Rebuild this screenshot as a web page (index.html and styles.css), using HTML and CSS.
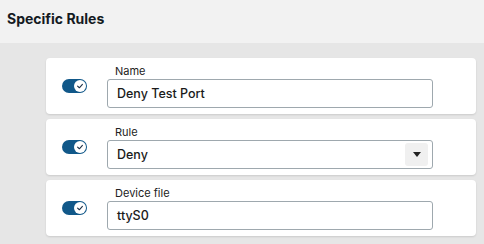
FILE: index.html
```html
<!DOCTYPE html>
<html>
<head>
<meta charset="utf-8">
<link rel="stylesheet" href="styles.css">
</head>
<body>
<header class="header"><h1 class="title">Specific Rules</h1></header>
<main class="list">
  <section class="card">
    <span class="toggle"><span class="knob"><svg viewBox="0 0 10 10" width="8" height="8"><path d="M2 5.2 L4.2 7.2 L8 3" fill="none" stroke="#1b2f45" stroke-width="1.4" stroke-linecap="round" stroke-linejoin="round"/></svg></span></span>
    <div class="field">
      <label class="label">Name</label>
      <div class="input">Deny Test Port</div>
    </div>
  </section>
  <section class="card">
    <span class="toggle"><span class="knob"><svg viewBox="0 0 10 10" width="8" height="8"><path d="M2 5.2 L4.2 7.2 L8 3" fill="none" stroke="#1b2f45" stroke-width="1.4" stroke-linecap="round" stroke-linejoin="round"/></svg></span></span>
    <div class="field">
      <label class="label">Rule</label>
      <div class="input select"><span>Deny</span><span class="caret"><svg viewBox="0 0 8 5" width="8" height="5"><path d="M0 0 H8 L4 5 Z" fill="#222"/></svg></span></div>
    </div>
  </section>
  <section class="card">
    <span class="toggle"><span class="knob"><svg viewBox="0 0 10 10" width="8" height="8"><path d="M2 5.2 L4.2 7.2 L8 3" fill="none" stroke="#1b2f45" stroke-width="1.4" stroke-linecap="round" stroke-linejoin="round"/></svg></span></span>
    <div class="field">
      <label class="label">Device file</label>
      <div class="input">ttyS0</div>
    </div>
  </section>
</main>
</body>
</html>
```
FILE: styles.css
```css
* { box-sizing: border-box; }
html, body { margin: 0; padding: 0; }
body {
  width: 484px;
  height: 244px;
  overflow: hidden;
  background: #e6e6e6;
  font-family: Inter, "Noto Sans", sans-serif;
  color: #1c1c1c;
}
.header {
  height: 43px;
  background: #f2f2f2;
  padding: 10px 7px 0;
}
.title {
  margin: 0;
  font-size: 14px;
  line-height: 17px;
  font-weight: 700;
  color: #141a22;
}
.list {
  padding: 15px 8px 0 46px;
  display: flex;
  flex-direction: column;
  gap: 5px;
}
.card {
  height: 56px;
  background: #fff;
  border-radius: 4px;
  box-shadow: 0 1px 2px rgba(0,0,0,0.12);
  display: flex;
  align-items: center;
  padding: 0 43px 0 16px;
}
.toggle {
  width: 25px;
  height: 14px;
  border-radius: 7px;
  background: #115889;
  display: flex;
  align-items: center;
  justify-content: flex-end;
  padding-right: 1px;
  flex: none;
}
.knob {
  width: 12px;
  height: 12px;
  border-radius: 50%;
  background: #fff;
  display: flex;
  align-items: center;
  justify-content: center;
}
.field {
  margin-left: 20px;
  flex: 1;
  display: flex;
  flex-direction: column;
  gap: 1px;
}
.label {
  font-size: 11px;
  line-height: 14px;
  color: #222;
  padding-left: 8px;
}
.input {
  height: 29px;
  border: 1px solid #9ea8ae;
  border-radius: 3px;
  padding: 0 9px;
  display: flex;
  align-items: center;
  font-size: 12.5px;
  font-weight: 500;
  color: #1a1a1a;
}
.select {
  justify-content: space-between;
  padding-right: 4px;
}
.caret {
  width: 23px;
  height: 23px;
  border-radius: 3px;
  background: #f0f0f0;
  display: flex;
  align-items: center;
  justify-content: center;
}
```
